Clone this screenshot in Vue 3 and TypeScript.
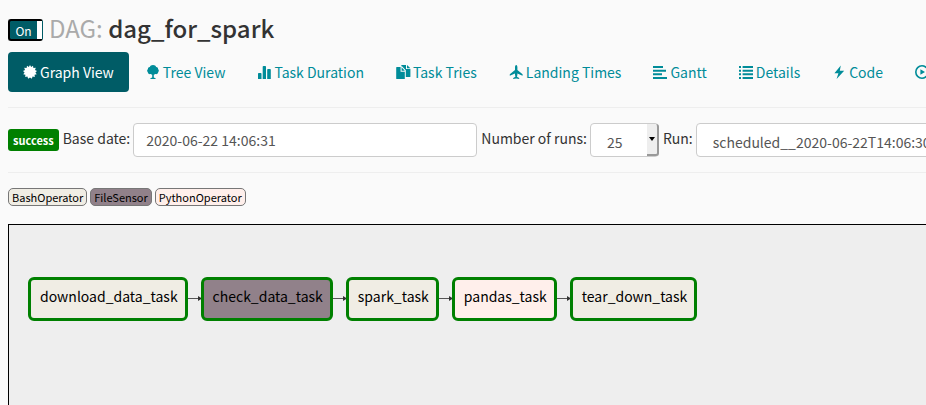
<script setup lang="ts">
import { ref } from 'vue'

interface Tab {
  label: string
  paths: string[]
  active?: boolean
}

interface TaskNode {
  id: string
  kind: 'bash' | 'sensor' | 'python'
}

const tabs: Tab[] = [
  {
    label: 'Graph View',
    active: true,
    paths: [
      'M7 0 8.2 2 10 .8 10.4 3 12.8 2.8 12 5 14 6 12.4 7.4 13.8 9.2 11.6 9.8 11.8 12 9.6 11.6 8.8 13.8 7 12.4 5.2 13.8 4.4 11.6 2.2 12 2.4 9.8 .2 9.2 1.6 7.4 0 6 2 5 1.2 2.8 3.6 3 4 .8 5.8 2Z',
    ],
  },
  {
    label: 'Tree View',
    paths: [
      'M7 0C8.7 0 9.9 .8 10.2 2 11.6 2 12.3 3 12 4.1 13 4.8 13.2 6.3 12.2 7.2 12 8.8 10.5 9.5 9.2 9 8.7 9.6 8.2 9.8 7.8 9.8V12.6L9.6 13.2V14H4.4V13.2L6.2 12.6V9.8C5.8 9.8 5.3 9.6 4.8 9 3.5 9.5 2 8.8 1.8 7.2.8 6.3 1 4.8 2 4.1 1.7 3 2.4 2 3.8 2 4.1.8 5.3 0 7 0Z',
    ],
  },
  {
    label: 'Task Duration',
    paths: [
      'M1.8 8H3.7Q4.5 8 4.5 8.8V14H1V8.8Q1 8 1.8 8ZM6.5 1H8.2Q9 1 9 1.8V14H5.7V1.8Q5.7 1 6.5 1ZM11 4H13Q13.8 4 13.8 4.8V14H10.2V4.8Q10.2 4 11 4Z',
    ],
  },
  {
    label: 'Task Tries',
    paths: [
      'M.8 2H4.6V6.8H8.8V14H.8Q.2 14 .2 13.4V2.6Q.2 2 .8 2ZM5.6 2.2 8.8 5.8H5.6Z',
      'M5.8 0H10V4H14.4V11.4Q14.4 12 13.8 12H9.8V5.2L6 1.2H5.2Q5.2 0 5.8 0ZM11 0 14.4 3.2H11Z',
    ],
  },
  {
    label: 'Landing Times',
    paths: [
      'M7.2 0C8 0 8.4 1.1 8.4 2.2V5L13.6 9.2V10.8L8.4 8.6V9.8L8 11.8 10.2 13V14L7.2 13.4 4.2 14V13L6.4 11.8 6 9.8V8.6L.8 10.8V9.2L6 5V2.2C6 1.1 6.4 0 7.2 0Z',
    ],
  },
  {
    label: 'Gantt',
    paths: ['M0 1H10V3H0ZM0 4.7H13V6.7H0ZM0 8.3H9V10.3H0ZM0 12H14V14H0Z'],
  },
  {
    label: 'Details',
    paths: [
      'M0 1H2V3H0ZM3.6 1H14V3H3.6ZM0 4.7H2V6.7H0ZM3.6 4.7H14V6.7H3.6ZM0 8.3H2V10.3H0ZM3.6 8.3H14V10.3H3.6ZM0 12H2V14H0ZM3.6 12H14V14H3.6Z',
    ],
  },
  {
    label: 'Code',
    paths: ['M8.8 .6 7.8 5.8H12.2L4.6 14 6.4 8.2H2.4Z'],
  },
  {
    label: 'Trigger DAG',
    paths: [
      'M7 0A7 7 0 1 0 7 14 7 7 0 0 0 7 0ZM7 1.6A5.4 5.4 0 1 1 7 12.4 5.4 5.4 0 0 1 7 1.6ZM5.4 4.2V9.8L10 7Z',
    ],
  },
]

const operators: { name: string; kind: TaskNode['kind'] }[] = [
  { name: 'BashOperator', kind: 'bash' },
  { name: 'FileSensor', kind: 'sensor' },
  { name: 'PythonOperator', kind: 'python' },
]

const tasks: TaskNode[] = [
  { id: 'download_data_task', kind: 'bash' },
  { id: 'check_data_task', kind: 'sensor' },
  { id: 'spark_task', kind: 'bash' },
  { id: 'pandas_task', kind: 'python' },
  { id: 'tear_down_task', kind: 'bash' },
]

const enabled = ref(true)
const baseDate = ref('2020-06-22 14:06:31')
const runCount = ref('25')
const run = ref('scheduled__2020-06-22T14:06:30')
</script>

<template>
  <main class="page">
    <header class="heading">
      <button
        class="toggle"
        type="button"
        role="switch"
        :aria-checked="enabled"
        @click="enabled = !enabled"
      >
        <span class="toggle-text">{{ enabled ? 'On' : 'Off' }}</span>
        <span class="toggle-knob"></span>
      </button>
      <h1 class="title"><span class="muted">DAG:</span> dag_for_spark</h1>
    </header>

    <nav class="tabs">
      <a
        v-for="tab in tabs"
        :key="tab.label"
        href="#"
        class="tab"
        :class="{ active: tab.active }"
      >
        <svg class="icon" viewBox="0 0 14 14" aria-hidden="true">
          <path v-for="d in tab.paths" :key="d" :d="d" fill-rule="evenodd" />
        </svg>
        <span>{{ tab.label }}</span>
      </a>
    </nav>

    <hr class="rule" />

    <form class="filters" @submit.prevent>
      <span class="state">success</span>
      <label for="base-date">Base date:</label>
      <input id="base-date" v-model="baseDate" class="control date" type="text" />
      <label for="run-count">Number of runs:</label>
      <span class="select-box">
        <select id="run-count" v-model="runCount" class="control count">
          <option>25</option>
        </select>
        <span class="arrow"></span>
      </span>
      <label for="run">Run:</label>
      <select id="run" v-model="run" class="control run">
        <option>scheduled__2020-06-22T14:06:30</option>
      </select>
    </form>

    <hr class="rule" />

    <div class="legend">
      <span v-for="op in operators" :key="op.name" class="chip" :class="op.kind">{{ op.name }}</span>
    </div>

    <section class="graph">
      <template v-for="(task, i) in tasks" :key="task.id">
        <svg v-if="i > 0" class="edge" viewBox="0 0 13 8" aria-hidden="true">
          <path d="M0 4.5H10" stroke="#555" fill="none" />
          <path d="M10 2 14 4.5 10 7Z" fill="#333" />
        </svg>
        <div class="node" :class="task.kind">{{ task.id }}</div>
      </template>
    </section>
  </main>
</template>

<style>
body {
  background: #fafafa;
}
</style>

<style scoped>
.page {
  box-sizing: border-box;
  display: flex;
  flex-direction: column;
  min-height: 100vh;
  padding-left: 8px;
  overflow: hidden;
  color: #333;
  font-family: "Noto Sans CJK SC", "Noto Sans", sans-serif;
  font-size: 14px;
  line-height: 20px;
  white-space: nowrap;
}

.heading {
  display: flex;
  align-items: center;
  gap: 6px;
  height: 36px;
  padding-top: 10px;
  margin-bottom: 6px;
}

.toggle {
  box-sizing: border-box;
  display: flex;
  width: 35px;
  height: 22px;
  margin-top: 4px;
  padding: 0;
  border: 2px solid #000;
  border-right: 1px solid #005c66;
  border-radius: 3px;
  background: #005c66;
  color: #fff;
  font: inherit;
  font-size: 12px;
  line-height: 20px;
}

.toggle-text {
  flex: 1;
}

.toggle-knob {
  width: 5px;
  height: 18px;
  background: #fff;
}

.title {
  margin: 0;
  font-size: 24px;
  font-weight: 500;
  line-height: 36px;
}

.muted {
  color: #aaa;
  font-weight: 400;
}

.tabs {
  display: flex;
  gap: 2px;
}

.tab {
  display: flex;
  flex: none;
  align-items: center;
  gap: 3px;
  padding: 10px 15px;
  border-radius: 4px;
  color: #008c99;
  text-decoration: none;
}

.tab.active {
  background: #005c66;
  color: #fff;
}

.icon {
  width: 14px;
  height: 14px;
  overflow: visible;
  fill: currentColor;
}

.rule {
  width: 100%;
  height: 1px;
  margin: 15px 0;
  border: 0;
  background: #eee;
}

.filters {
  display: flex;
  align-items: center;
  gap: 4px;
}

.filters label {
  margin-right: -1px;
  padding-bottom: 4px;
}

.state {
  padding: 1px 5px;
  border-radius: 3px;
  background: #008000;
  color: #fff;
  font-size: 11px;
  font-weight: 700;
}

.control {
  box-sizing: border-box;
  flex: none;
  height: 34px;
  margin: 0;
  padding: 0 12px;
  border: 1px solid #ccc;
  border-radius: 4px;
  appearance: none;
  background: #fff;
  color: #555;
  font: inherit;
}

.date {
  width: 344px;
}

.select-box {
  position: relative;
  display: flex;
}

.count {
  width: 69px;
  padding: 4px 16px 0;
}

.arrow {
  position: absolute;
  top: 1px;
  right: 0;
  bottom: 1px;
  display: flex;
  align-items: center;
  justify-content: center;
  box-sizing: border-box;
  width: 12px;
  border: solid #999;
  border-width: 0 2px 2px 0;
  border-radius: 0 3px 3px 0;
  background: #eee;
  pointer-events: none;
}

.arrow::before {
  content: "";
  border: 3px solid transparent;
  border-top: 4px solid #000;
  border-bottom: 0;
}

.run {
  flex: 1 0 auto;
  padding: 4px 16px 0;
}

.legend {
  display: flex;
  gap: 3px;
}

.chip {
  padding: 0 3px;
  border: 1px solid #777;
  border-radius: 5px;
  color: #000;
  font-size: 11px;
  line-height: 16px;
}

.bash {
  background: #f0ede4;
}

.sensor {
  background: #91818a;
}

.python {
  background: #ffefeb;
}

.graph {
  display: flex;
  flex: 1;
  align-items: flex-start;
  margin-top: 18px;
  padding: 52px 19px;
  border: solid #000;
  border-width: 1px 0 0 1px;
  background: #eee;
}

.node {
  padding: 6px 7px 12px 9px;
  border: 3px solid #008000;
  border-radius: 6px;
  color: #000;
}

.edge {
  width: 13px;
  height: 8px;
  margin-top: 17px;
  overflow: visible;
}
</style>
